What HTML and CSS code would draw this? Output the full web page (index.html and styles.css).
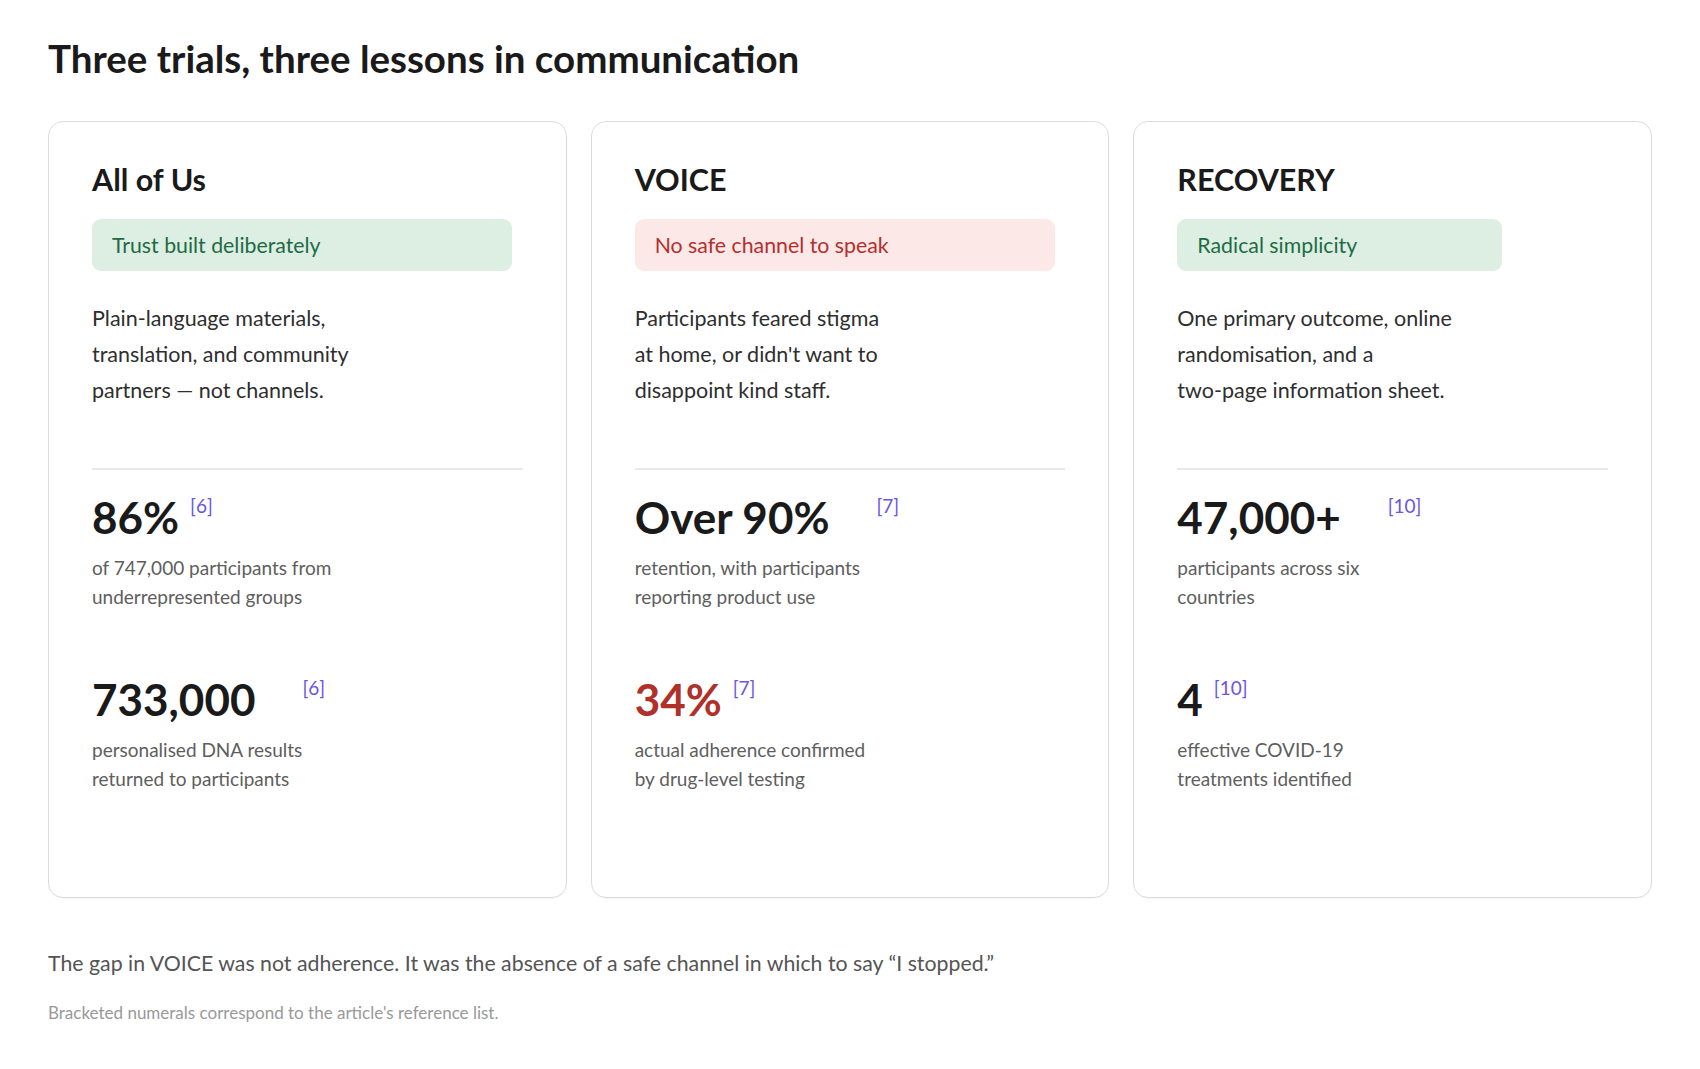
FILE: index.html
```html
<!DOCTYPE html>
<html lang="en">
<head>
<meta charset="utf-8">
<title>Three trials, three lessons in communication</title>
<link rel="stylesheet" href="styles.css">
</head>
<body>
<main class="page">
  <h1 class="title">Three trials, three lessons in communication</h1>
  <section class="cards">
    <article class="card">
      <h2 class="card-title">All of Us</h2>
      <div class="tag tag-good">Trust built deliberately</div>
      <p class="desc">Plain-language materials,<br>translation, and community<br>partners — not channels.</p>
      <div class="stats">
        <div class="stat">
          <div class="num-line"><span class="num">86%</span><span class="ref">[6]</span></div>
          <p class="label">of 747,000 participants from underrepresented groups</p>
        </div>
        <div class="stat">
          <div class="num-line"><span class="num">733,000</span><span class="ref ref-far">[6]</span></div>
          <p class="label">personalised DNA results returned to participants</p>
        </div>
      </div>
    </article>
    <article class="card">
      <h2 class="card-title">VOICE</h2>
      <div class="tag tag-bad">No safe channel to speak</div>
      <p class="desc">Participants feared stigma<br>at home, or didn't want to<br>disappoint kind staff.</p>
      <div class="stats">
        <div class="stat">
          <div class="num-line"><span class="num">Over 90%</span><span class="ref ref-far">[7]</span></div>
          <p class="label">retention, with participants reporting product use</p>
        </div>
        <div class="stat">
          <div class="num-line"><span class="num num-bad">34%</span><span class="ref">[7]</span></div>
          <p class="label">actual adherence confirmed by drug-level testing</p>
        </div>
      </div>
    </article>
    <article class="card">
      <h2 class="card-title">RECOVERY</h2>
      <div class="tag tag-good tag-short">Radical simplicity</div>
      <p class="desc">One primary outcome, online<br>randomisation, and a<br>two-page information sheet.</p>
      <div class="stats">
        <div class="stat">
          <div class="num-line"><span class="num">47,000+</span><span class="ref ref-far">[10]</span></div>
          <p class="label">participants across six countries</p>
        </div>
        <div class="stat">
          <div class="num-line"><span class="num">4</span><span class="ref">[10]</span></div>
          <p class="label">effective COVID-19 treatments identified</p>
        </div>
      </div>
    </article>
  </section>
  <p class="closing">The gap in VOICE was not adherence. It was the absence of a safe channel in which to say “I stopped.”</p>
  <p class="note">Bracketed numerals correspond to the article's reference list.</p>
</main>
</body>
</html>
```

FILE: styles.css
```css
html, body {
  margin: 0;
  padding: 0;
  background: #ffffff;
}

body {
  font-family: Lato, "Open Sans", "Liberation Sans", sans-serif;
  color: #1a1a1a;
}

.page {
  padding: 35px 48px 0;
}

.title {
  margin: 0;
  font-size: 38.5px;
  line-height: 1.2;
  font-weight: 700;
  color: #1a1a1a;
}

.cards {
  display: grid;
  grid-template-columns: repeat(3, 1fr);
  gap: 24px;
  margin-top: 40px;
}

.card {
  border: 1.5px solid #dcdcdc;
  border-radius: 15px;
  padding: 39px 43px 104px;
  box-shadow: 0 1px 1px rgba(0, 0, 0, 0.04);
}

.card-title {
  margin: 0;
  font-size: 30.5px;
  line-height: 1.2;
  font-weight: 700;
  color: #1a1a1a;
}

.tag {
  margin-top: 21px;
  width: 420px;
  box-sizing: border-box;
  height: 52px;
  padding: 0 20px;
  display: flex;
  align-items: center;
  border-radius: 9px;
  font-size: 21.3px;
}

.tag-short {
  width: 325px;
}

.tag-good {
  background: #dcefe2;
  color: #1f6b45;
}

.tag-bad {
  background: #fde8e8;
  color: #b3302e;
}

.desc {
  margin: 29px 0 0;
  font-size: 21.5px;
  line-height: 36px;
  color: #2e2e2e;
}

.stats {
  margin-top: 60px;
  border-top: 2px solid #e8e8e8;
  padding-top: 20px;
}

.stat {
  margin-bottom: 61px;
}

.stat:last-child {
  margin-bottom: 0;
}

.num-line {
  white-space: nowrap;
  font-size: 44px;
  line-height: 55px;
  height: 55px;
}

.num {
  font-weight: 700;
  color: #1a1a1a;
}

.num-bad {
  color: #b0302a;
}

.ref {
  margin-left: 11px;
  font-size: 19px;
  line-height: 1;
  vertical-align: 21px;
  color: #6a55e6;
}

.ref-far {
  margin-left: 47px;
}

.label {
  margin: 8px 0 0;
  max-width: 245px;
  font-size: 19px;
  line-height: 29px;
  color: #5e5e5e;
}

.closing {
  margin: 50px 0 0;
  font-size: 21.3px;
  line-height: 1.5;
  color: #555555;
}

.note {
  margin: 20px 0 0;
  font-size: 17px;
  line-height: 1.5;
  color: #999999;
}
```
